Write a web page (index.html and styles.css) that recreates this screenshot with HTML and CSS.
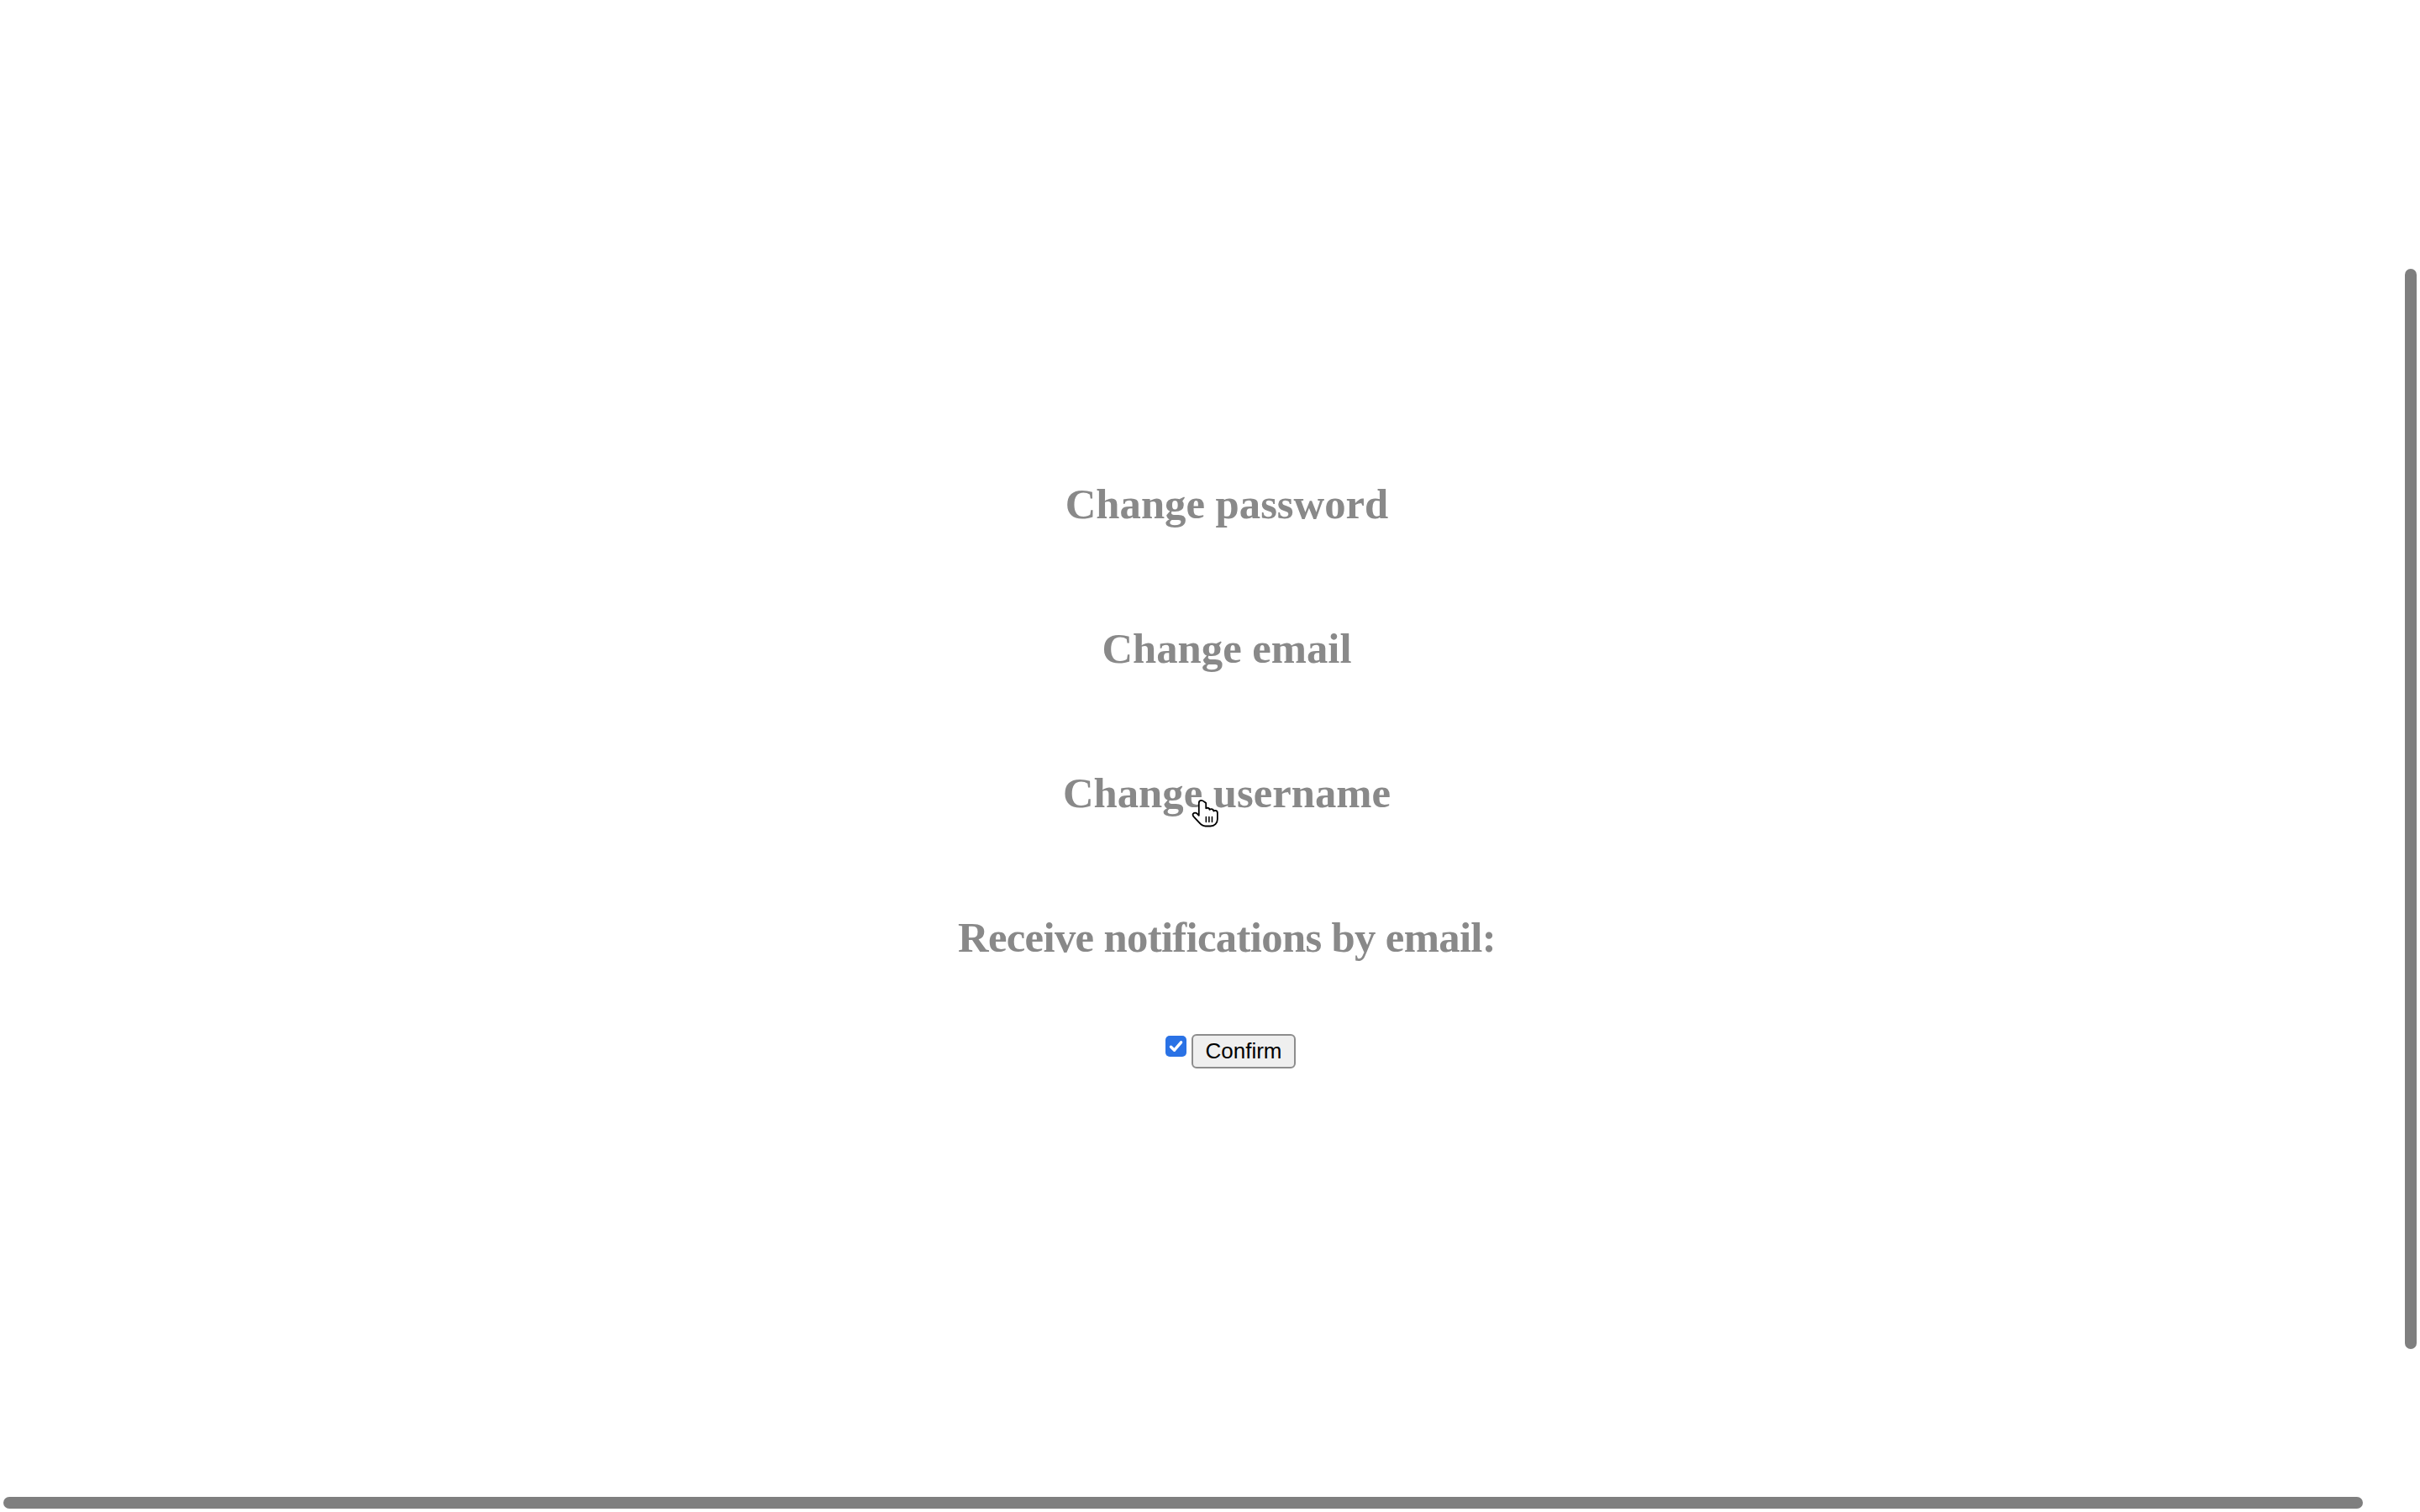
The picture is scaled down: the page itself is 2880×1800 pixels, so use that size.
FILE: index.html
```html
<!DOCTYPE html>
<html lang="en">
<head>
<meta charset="utf-8">
<title>Settings</title>
<link rel="stylesheet" href="styles.css">
</head>
<body>
<main class="settings">
  <h2 class="option">Change password</h2>
  <h2 class="option">Change email</h2>
  <h2 class="option">Change username</h2>
  <h2 class="option option-last">Receive notifications by email:</h2>
  <form class="confirm-row">
    <label class="check">
      <input class="check-input" type="checkbox" checked>
      <svg class="check-mark" viewBox="0 0 25 25" width="25" height="25" aria-hidden="true"><path d="M6.5 13.2 L10.6 17.2 L18.6 7.8" fill="none" stroke="#fff" stroke-width="3.4" stroke-linecap="round" stroke-linejoin="round"/></svg>
    </label>
    <button class="confirm-btn" type="button">Confirm</button>
  </form>
</main>
<svg class="cursor" viewBox="0 0 32 32" width="38" height="38" aria-hidden="true">
  <path d="M10 2.5c-1.5 0-2.6 1.1-2.6 2.6V17.5l-2-2c-1-1-2.7-1-3.5 0-.8.9-.6 2.2.2 3.1L8 25c1.5 1.8 3.5 3.2 6 3.2h5c4 0 7-3 7-7v-6.2c0-1.4-1-2.4-2.3-2.4-.6 0-1.1.2-1.5.5-.2-1.2-1.2-2-2.4-2-.6 0-1.2.2-1.6.6-.3-1.1-1.2-1.8-2.3-1.8-.5 0-1 .1-1.4.4V5.1C12.6 3.6 11.5 2.5 10 2.5z" fill="#fff" stroke="#000" stroke-width="1.5" stroke-linejoin="round"/>
  <path d="M14.6 19v5M17.6 19v5M20.6 19v5" stroke="#000" stroke-width="1.3" stroke-linecap="round"/>
</svg>
<div class="vscroll"></div>
<div class="hscroll"></div>
</body>
</html>
```

FILE: styles.css
```css
html, body {
  margin: 0;
  padding: 0;
  background: #ffffff;
  overflow: hidden;
  height: 100%;
}

.settings {
  display: flex;
  flex-direction: column;
  align-items: center;
  padding: 571px 0 0 40px;
  gap: 114px;
}

.option {
  margin: 0;
  font-family: "Liberation Serif", "Times New Roman", serif;
  font-weight: bold;
  font-size: 50.7px;
  line-height: 58px;
  color: #898989;
  white-space: nowrap;
}

.option-last {
  margin-bottom: -28px;
  letter-spacing: -0.65px;
}

.confirm-row {
  display: flex;
  align-items: flex-start;
  gap: 6px;
  margin: 0 0 0 9px;
}

.check {
  position: relative;
  display: block;
  width: 25px;
  height: 25px;
  margin-top: 2px;
}

.check-input {
  appearance: none;
  -webkit-appearance: none;
  margin: 0;
  width: 25px;
  height: 25px;
  border-radius: 5px;
  background: #2a72e5;
  display: block;
}

.check-mark {
  position: absolute;
  left: 0;
  top: 0;
  pointer-events: none;
}

.confirm-btn {
  box-sizing: border-box;
  width: 124px;
  height: 41px;
  margin: 0;
  padding: 0 10px;
  border: 2px solid #8d8d8d;
  border-radius: 6px;
  background: #efefef;
  font-family: "Liberation Sans", Arial, sans-serif;
  font-size: 26px;
  color: #000;
}

.cursor {
  position: absolute;
  left: 1418px;
  top: 950px;
}

.vscroll {
  position: absolute;
  left: 2862px;
  top: 320px;
  width: 14px;
  height: 1286px;
  border-radius: 7px;
  background: #7f7f7f;
}

.hscroll {
  position: absolute;
  left: 4px;
  top: 1782px;
  width: 2808px;
  height: 14px;
  border-radius: 7px;
  background: #7f7f7f;
}
```
